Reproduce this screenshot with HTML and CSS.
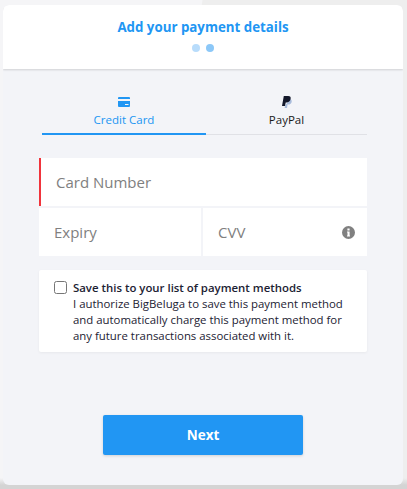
FILE: index.html
```html
<!DOCTYPE html>
<html lang="en">
<head>
    <meta charset="UTF-8">
    <meta name="viewport" content="width=device-width, initial-scale=1.0">
    <title>Add your payment details</title>
    <link rel="stylesheet" href="styles.css">
</head>
<body>

    <div class="modal">
        <header class="modal-header">
            <h1>Add your payment details</h1>
            <div class="steps">
                <span class="step"></span>
                <span class="step step-active"></span>
            </div>
        </header>

        <div class="modal-body">
            <!-- Payment tabs -->
            <div class="tabs">
                <div class="tab tab-active">
                    <svg class="tab-icon" width="12" height="10" viewBox="0 0 12 10">
                        <path fill="#2196f3" fill-rule="evenodd" d="M1 0h10a1 1 0 0 1 1 1v1H0V1a1 1 0 0 1 1-1zM0 4h12v5a1 1 0 0 1-1 1H1a1 1 0 0 1-1-1zM7 7v1h3.500V7z"/>
                    </svg>
                    <span>Credit Card</span>
                </div>
                <div class="tab">
                    <svg class="tab-icon" width="10" height="12" viewBox="0 0 10 12">
                        <path fill="#a9bcdc" d="M8.300 3c1.400.8 1.700 2 1.300 3.300-.5 1.600-1.700 2.300-3.300 2.300h-.7L5 12H2.600l.5-2.500z"/>
                        <path fill="#14182b" d="M1.800 0h4.300c2.200 0 3 1.200 2.500 3.100C8.100 5.300 6.600 6.500 4.500 6.500H3.700L3 10H0z"/>
                    </svg>
                    <span>PayPal</span>
                </div>
            </div>

            <!-- Card fields -->
            <div class="fields">
                <div class="field field-error">Card Number</div>
                <div class="field-row">
                    <div class="field field-expiry">Expiry</div>
                    <div class="field field-cvv">
                        <span>CVV</span>
                        <svg width="13" height="13" viewBox="0 0 13 13">
                            <path fill="#808080" fill-rule="evenodd" d="M6.500 0a6.500 6.500 0 1 1 0 13a6.500 6.500 0 0 1 0-13zM5.400 2.500v2h2.200v-2zM5 5.500v1h.5v3H5v1h3v-1h-.4v-4z"/>
                        </svg>
                    </div>
                </div>
            </div>

            <!-- Save method -->
            <label class="save-box">
                <input type="checkbox" class="save-check">
                <span class="save-text">
                    <strong>Save this to your list of payment methods</strong>
                    I authorize BigBeluga to save this payment method and automatically charge this payment method for any future transactions associated with it.
                </span>
            </label>

            <button class="next-button">Next</button>
        </div>
    </div>

</body>
</html>
```

FILE: styles.css
```css
html, body {
    height: 100%;
}
body {
    margin: 0;
    padding: 5px 4px 4px 3px;
    box-sizing: border-box;
    background:
        linear-gradient(to bottom, transparent 478px, #d4d4d4 485px),
        linear-gradient(100deg, #f5f5f7 199px, #eeeeee 200px);
    font-family: "Open Sans", "Noto Sans", Arial, sans-serif;
}
.modal {
    height: 480px;
    display: flex;
    flex-direction: column;
    background-color: #f3f4f8;
    border-radius: 6px;
    overflow: hidden;
}
.modal-header {
    height: 64px;
    flex-shrink: 0;
    box-sizing: border-box;
    padding-top: 12px;
    background-color: white;
    box-shadow: 0 1px 2px rgba(0, 0, 0, 0.15);
    text-align: center;
    position: relative;
}
.modal-header h1 {
    margin: 0;
    font-size: 13.300px;
    line-height: 20px;
    font-weight: 700;
    color: #2196f3;
}
.steps {
    display: flex;
    justify-content: center;
    gap: 6px;
    margin-top: 7px;
}
.step {
    width: 8px;
    height: 8px;
    border-radius: 50%;
    background-color: #b8dcfb;
}
.step-active {
    background-color: #8cc8f8;
}
.modal-body {
    flex: 1;
    padding: 27px 36px 0;
    display: flex;
    flex-direction: column;
}
.tabs {
    display: flex;
    margin: 0 0 0 3px;
    border-bottom: 1px solid #e0e1e6;
}
.tab {
    flex: 1;
    height: 37px;
    display: flex;
    flex-direction: column;
    align-items: center;
    font-size: 11.500px;
    line-height: 17px;
    color: #1a1a1a;
}
.tab-active {
    flex: 0 0 164px;
    color: #2196f3;
    border-bottom: 2px solid #2196f3;
    margin-bottom: -1px;
}
.tab-icon {
    display: block;
    height: 12px;
    margin-bottom: 3px;
}
.fields {
    margin-top: 23px;
    display: flex;
    flex-direction: column;
    gap: 2px;
}
.field {
    height: 48px;
    box-sizing: border-box;
    display: flex;
    align-items: center;
    justify-content: space-between;
    padding: 0 14px 0 15px;
    background-color: white;
    font-size: 15px;
    color: #808080;
}
.field-error {
    border-left: 2px solid #f0343c;
}
.field-row {
    display: flex;
    gap: 2px;
}
.field-expiry {
    flex: 0 0 162px;
}
.field-cvv {
    flex: 1;
    padding-right: 12px;
}
.save-box {
    margin-top: 14px;
    padding: 10px 12px 8px 15px;
    display: flex;
    gap: 6px;
    background-color: white;
    border-radius: 2px;
    box-shadow: 0 1px 3px rgba(0, 0, 0, 0.05);
    font-size: 11.400px;
    line-height: 16px;
    color: #1c2233;
}
.save-box strong {
    display: block;
    font-weight: 600;
}
.save-check {
    width: 13px;
    height: 13px;
    margin: 1px 0 0;
    flex-shrink: 0;
}
.next-button {
    align-self: center;
    width: 200px;
    height: 40px;
    margin-top: 63px;
    background-color: #2196f3;
    border: none;
    border-radius: 2px;
    box-shadow: 0 1px 3px rgba(0, 0, 0, 0.15);
    color: white;
    font-family: inherit;
    font-size: 13.500px;
    font-weight: 700;
}
```
